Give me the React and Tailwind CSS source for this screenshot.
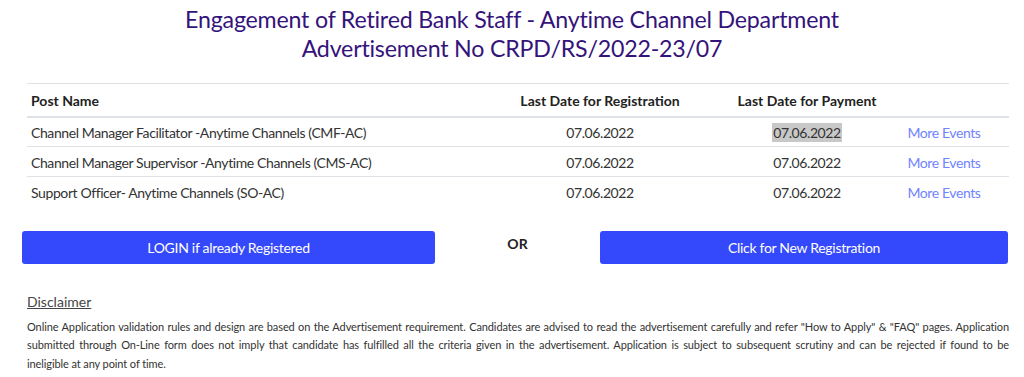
const rows = [
  { name: 'Channel Manager Facilitator -Anytime Channels (CMF-AC)', reg: '07.06.2022', pay: '07.06.2022', hl: true },
  { name: 'Channel Manager Supervisor -Anytime Channels (CMS-AC)', reg: '07.06.2022', pay: '07.06.2022' },
  { name: 'Support Officer- Anytime Channels (SO-AC)', reg: '07.06.2022', pay: '07.06.2022' },
];

const disclaimer = [
  'Online Application validation rules and design are based on the Advertisement requirement. Candidates are advised to read the advertisement carefully and refer "How to Apply" & "FAQ" pages. Application',
  'submitted through On-Line form does not imply that candidate has fulfilled all the criteria given in the advertisement. Application is subject to subsequent scrutiny and can be rejected if found to be',
];

export default function App() {
  return (
    <div className="w-[1024px] h-[377px] bg-white overflow-hidden text-[#333] font-['Lato','Liberation_Sans',sans-serif]">
      <div className="pt-[5px] text-center text-[#34137a] text-[23.2px] leading-[29px] tracking-[-0.2px]">
        <div>Engagement of Retired Bank Staff - Anytime Channel Department</div>
        <div>Advertisement No CRPD/RS/2022-23/07</div>
      </div>

      <div className="mt-[20px] ml-[27px] w-[982px]">
        <table className="w-full border-collapse text-[14px] tracking-[-0.4px]">
          <thead>
            <tr className="border-t border-[#dee2e6] border-b-2">
              <th className="w-[438px] text-left font-bold text-[#222] px-[4px] h-[33px] pt-[2px] tracking-normal">Post Name</th>
              <th className="w-[270px] text-center font-bold text-[#222] pt-[2px] tracking-normal">Last Date for Registration</th>
              <th className="w-[144px] text-center font-bold text-[#222] pt-[2px] tracking-normal">Last Date for Payment</th>
              <th className="w-[130px]"></th>
            </tr>
          </thead>
          <tbody>
            {rows.map((r, i) => (
              <tr key={i} className={i < rows.length - 1 ? 'border-b border-[#dee2e6] h-[30px]' : 'h-[30px]'}>
                <td className="px-[4px] pt-[1px] text-[#333]">{r.name}</td>
                <td className="text-center pt-[1px]">{r.reg}</td>
                <td className="text-center pt-[1px]">
                  <span className={r.hl ? 'bg-[#c8c8c8] px-[1px] py-[1px]' : 'px-[1px]'}>{r.pay}</span>
                </td>
                <td className="text-center pt-[1px] text-[#6f84ff]">More Events</td>
              </tr>
            ))}
          </tbody>
        </table>
      </div>

      <div className="mt-[24px] ml-[22px] w-[986px] flex items-start">
        <button className="w-[413px] h-[33px] rounded-[3px] bg-[#3449fb] text-white text-[14px] tracking-[-0.3px]">LOGIN if already Registered</button>
        <div className="flex-1 text-center font-bold text-[14px] text-[#222] pt-[2px]">OR</div>
        <button className="w-[408px] h-[33px] rounded-[3px] bg-[#3449fb] text-white text-[14px] tracking-[-0.3px]">Click for New Registration</button>
      </div>

      <div className="mt-[29px] ml-[27px] w-[982px]">
        <div className="underline text-[14px] text-[#444] leading-[18px]">Disclaimer</div>
        <div className="mt-[7px] text-[11px] leading-[18.5px] text-[#333] tracking-[-0.1px]">
          {disclaimer.map((line, i) => (
            <div key={i} className="whitespace-nowrap text-justify [text-align-last:justify]">{line}</div>
          ))}
          <div>ineligible at any point of time.</div>
        </div>
      </div>
    </div>
  );
}
